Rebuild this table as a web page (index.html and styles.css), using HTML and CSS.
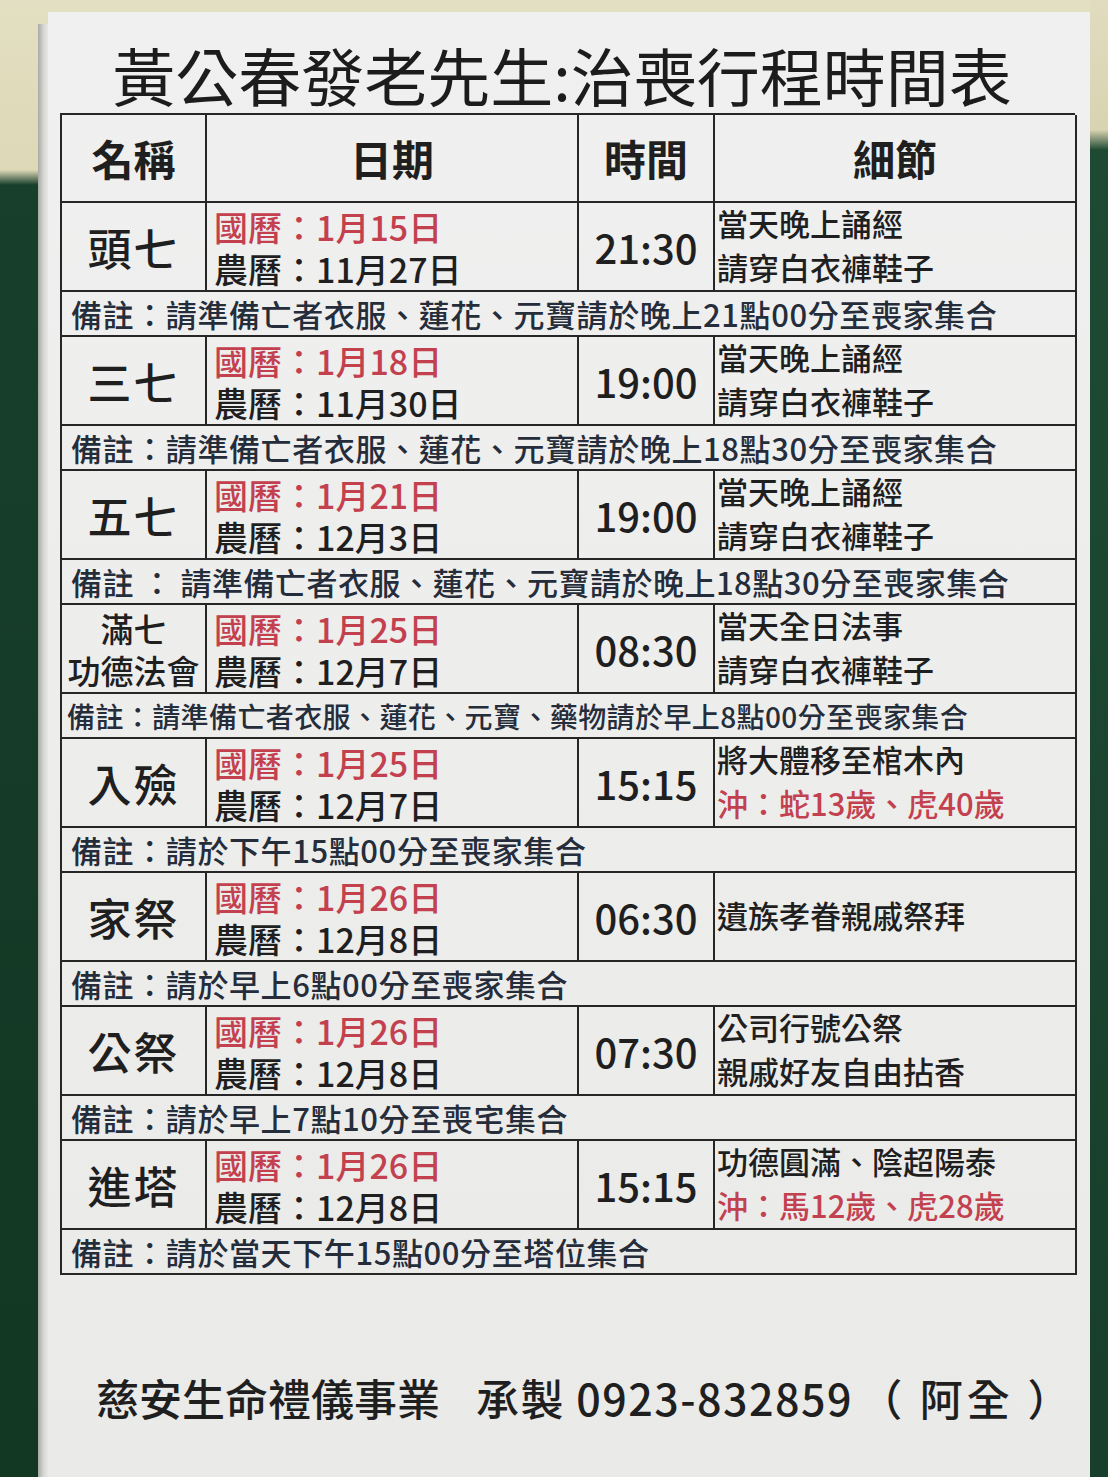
FILE: index.html
```html
<!DOCTYPE html>
<html lang="zh-Hant">
<head>
<meta charset="utf-8">
<title>黃公春發老先生:治喪行程時間表</title>
<link rel="stylesheet" href="styles.css">
</head>
<body>
<div class="scene">
  <div class="wall-left"></div>
  <div class="board-edge"></div>
  <div class="paper">
    <h1 class="title">黃公春發老先生:治喪行程時間表</h1>
    <div class="sheet">
      <div class="cell hd">名稱</div>
      <div class="cell hd">日期</div>
      <div class="cell hd">時間</div>
      <div class="cell hd">細節</div>

      <div class="cell name">頭七</div>
      <div class="cell date"><span class="ln red">國曆：1月15日</span><span class="ln">農曆：11月27日</span></div>
      <div class="cell time">21:30</div>
      <div class="cell detail"><span class="ln">當天晚上誦經</span><span class="ln">請穿白衣褲鞋子</span></div>
      <div class="cell note">備註：請準備亡者衣服、蓮花、元寶請於晚上21點00分至喪家集合</div>

      <div class="cell name">三七</div>
      <div class="cell date"><span class="ln red">國曆：1月18日</span><span class="ln">農曆：11月30日</span></div>
      <div class="cell time">19:00</div>
      <div class="cell detail"><span class="ln">當天晚上誦經</span><span class="ln">請穿白衣褲鞋子</span></div>
      <div class="cell note">備註：請準備亡者衣服、蓮花、元寶請於晚上18點30分至喪家集合</div>

      <div class="cell name">五七</div>
      <div class="cell date"><span class="ln red">國曆：1月21日</span><span class="ln">農曆：12月3日</span></div>
      <div class="cell time">19:00</div>
      <div class="cell detail"><span class="ln">當天晚上誦經</span><span class="ln">請穿白衣褲鞋子</span></div>
      <div class="cell note note-sp">備註 ： 請準備亡者衣服、蓮花、元寶請於晚上18點30分至喪家集合</div>

      <div class="cell name small"><span class="ln">滿七</span><span class="ln">功德法會</span></div>
      <div class="cell date"><span class="ln red">國曆：1月25日</span><span class="ln">農曆：12月7日</span></div>
      <div class="cell time">08:30</div>
      <div class="cell detail"><span class="ln">當天全日法事</span><span class="ln">請穿白衣褲鞋子</span></div>
      <div class="cell note note-sm">備註：請準備亡者衣服、蓮花、元寶、藥物請於早上8點00分至喪家集合</div>

      <div class="cell name">入殮</div>
      <div class="cell date"><span class="ln red">國曆：1月25日</span><span class="ln">農曆：12月7日</span></div>
      <div class="cell time">15:15</div>
      <div class="cell detail"><span class="ln">將大體移至棺木內</span><span class="ln red">沖：蛇13歲、虎40歲</span></div>
      <div class="cell note">備註：請於下午15點00分至喪家集合</div>

      <div class="cell name">家祭</div>
      <div class="cell date"><span class="ln red">國曆：1月26日</span><span class="ln">農曆：12月8日</span></div>
      <div class="cell time">06:30</div>
      <div class="cell detail"><span class="ln">遺族孝眷親戚祭拜</span></div>
      <div class="cell note">備註：請於早上6點00分至喪家集合</div>

      <div class="cell name">公祭</div>
      <div class="cell date"><span class="ln red">國曆：1月26日</span><span class="ln">農曆：12月8日</span></div>
      <div class="cell time">07:30</div>
      <div class="cell detail"><span class="ln">公司行號公祭</span><span class="ln">親戚好友自由拈香</span></div>
      <div class="cell note">備註：請於早上7點10分至喪宅集合</div>

      <div class="cell name">進塔</div>
      <div class="cell date"><span class="ln red">國曆：1月26日</span><span class="ln">農曆：12月8日</span></div>
      <div class="cell time">15:15</div>
      <div class="cell detail"><span class="ln">功德圓滿、陰超陽泰</span><span class="ln red">沖：馬12歲、虎28歲</span></div>
      <div class="cell note">備註：請於當天下午15點00分至塔位集合</div>
    </div>
    <p class="footer"><span class="company">慈安生命禮儀事業</span><span class="maker">承製 0923-832859</span><span class="contact">（ 阿全 ）</span></p>
  </div>
  <div class="wall-right"></div>
</div>
</body>
</html>
```

FILE: styles.css
```css
* { box-sizing: border-box; }

html, body {
  margin: 0;
  padding: 0;
}

body {
  font-family: "Noto Sans CJK TC", "Noto Sans CJK SC", "Noto Sans", sans-serif;
  color: #1f1f1f;
}

.scene {
  width: 1108px;
  height: 1477px;
  display: flex;
  overflow: hidden;
  background: linear-gradient(to bottom, #e3dfc2 0, #ddd8b6 170px, #173f2b 185px, #123723 100%);
}

.wall-left {
  width: 38px;
  flex: none;
}

.board-edge {
  width: 10px;
  flex: none;
  margin-top: 24px;
  background: linear-gradient(to right, #a9aaa6, #d9d9d6 60%, #e6e6e4);
}

.paper {
  width: 1042px;
  flex: none;
  margin-top: 12px;
  background: linear-gradient(to bottom, #f0f0f0 0, #ededec 50%, #eaeae9 100%);
  display: flex;
  flex-direction: column;
}

.wall-right {
  flex: 1;
  background: linear-gradient(to bottom, #e1dcbf 0, #d8d3b0 130px, #1e4a33 150px, #173f2b 100%);
}

.title {
  margin: 0;
  height: 101px;
  padding-top: 30px;
  font-size: 63px;
  line-height: 64px;
  font-weight: 400;
  text-align: center;
  color: #1c1c1c;
  padding-right: 14px;
  white-space: nowrap;
}

.sheet {
  margin-left: 12px;
  width: 1015px;
  display: grid;
  grid-template-columns: 145px 372px 136px 362px;
  grid-template-rows: 88px repeat(8, 89px 45px);
  border-top: 2px solid #262626;
  border-left: 2px solid #262626;
}

.cell {
  border-right: 2px solid #262626;
  border-bottom: 2px solid #262626;
  display: flex;
  flex-direction: column;
  justify-content: center;
  white-space: nowrap;
}

.ln {
  display: block;
}

.hd {
  align-items: center;
  font-size: 42px;
  font-weight: 700;
  line-height: 1;
}

.name {
  align-items: center;
  font-size: 44px;
  font-weight: 500;
  letter-spacing: 2px;
  line-height: 1;
}

.name.small {
  font-size: 33px;
  letter-spacing: 0;
}

.name.small .ln {
  height: 42px;
  line-height: 42px;
}

.date {
  padding-left: 7px;
  font-size: 34px;
  font-weight: 500;
  padding-top: 2px;
}

.date .ln {
  height: 42px;
  line-height: 42px;
}

.time {
  align-items: center;
  font-size: 40px;
  font-weight: 500;
  line-height: 1;
}

.detail {
  padding-left: 2px;
  font-size: 31px;
  font-weight: 500;
  padding-bottom: 4px;
}

.detail .ln {
  height: 44px;
  line-height: 44px;
}

.red {
  color: #c3414f;
}

.note {
  grid-column: 1 / -1;
  padding-left: 9px;
  font-size: 31px;
  font-weight: 500;
  line-height: 1;
  letter-spacing: 0.6px;
  color: #252d3b;
}

.note-sp {
  letter-spacing: 0.5px;
}

.note-sm {
  font-size: 28px;
  padding-left: 5px;
  letter-spacing: 0.4px;
}

.footer {
  margin: 96px 0 0 0;
  padding-left: 48px;
  font-size: 43px;
  line-height: 52px;
  font-weight: 500;
  color: #1f1f1f;
  display: flex;
  align-items: center;
  white-space: nowrap;
}

.footer span {
  flex: none;
}

.company {
  margin-right: 36px;
}

.maker {
  letter-spacing: 1.5px;
}

.contact {
  margin-left: 6px;
  letter-spacing: 4px;
}
```
